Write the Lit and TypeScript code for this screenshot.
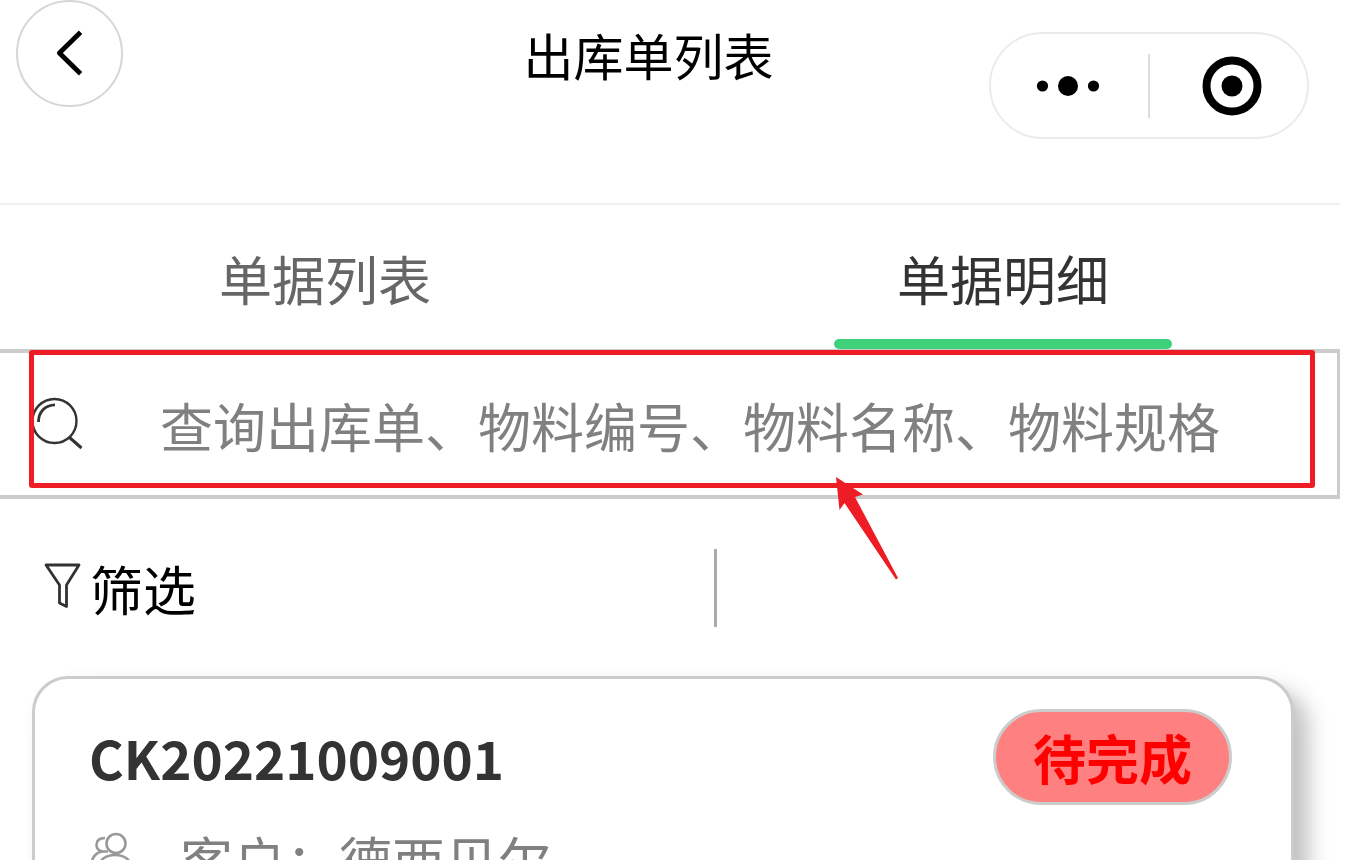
import { LitElement, html, css } from "lit";
import { customElement, property, state } from "lit/decorators.js";
import { classMap } from "lit/directives/class-map.js";

@customElement("nav-header")
class NavHeader extends LitElement {
  @property() heading = "";

  static styles = css`
    :host { display: block; }
    header {
      display: grid;
      grid-template-columns: 320px 1fr 320px;
      align-items: start;
      height: 203px;
      padding: 0 31px 0 16px;
      border-bottom: 2px solid #f0f0f0;
    }
    button {
      display: flex;
      align-items: center;
      justify-content: center;
      padding: 0;
      border: 0;
      background: none;
      cursor: pointer;
    }
    .back {
      box-sizing: border-box;
      width: 107px;
      height: 107px;
      border: 2px solid #d6d6d6;
      border-radius: 50%;
    }
    h1 {
      margin: 0;
      padding: 18px 28px 0 0;
      font-size: 50px;
      line-height: 72px;
      font-weight: 400;
      text-align: center;
      color: #000;
    }
    .capsule {
      box-sizing: border-box;
      display: grid;
      grid-template-columns: 1fr 2px 1fr;
      align-items: center;
      height: 107px;
      margin-top: 32px;
      border: 2px solid #ebebeb;
      border-radius: 54px;
    }
    .rule { height: 64px; background: #dcdcdc; }
    .capsule button { height: 100%; }
    .capsule .more { padding-right: 4px; }
    .capsule .close { padding-left: 6px; }
  `;

  render() {
    return html`
      <header>
        <button class="back" aria-label="返回">
          <svg width="107" height="107" viewBox="0 0 107 107" fill="none">
            <path d="M65 31.500 43 53 65 74.500" stroke="#000" stroke-width="5" stroke-linejoin="round" />
          </svg>
        </button>
        <h1>${this.heading}</h1>
        <div class="capsule">
          <button class="more" aria-label="更多">
            <svg width="64" height="22" viewBox="0 0 64 22">
              <circle cx="6.500" cy="11" r="5.600" /><circle cx="32" cy="11" r="10" /><circle cx="57.500" cy="11" r="5.600" />
            </svg>
          </button>
          <span class="rule"></span>
          <button class="close" aria-label="关闭">
            <svg width="60" height="60" viewBox="0 0 60 60">
              <circle cx="30" cy="30" r="25.500" fill="none" stroke="#000" stroke-width="8" />
              <circle cx="30" cy="30" r="10.500" />
            </svg>
          </button>
        </div>
      </header>
    `;
  }
}

@customElement("tab-bar")
class TabBar extends LitElement {
  @property({ attribute: false }) tabs: string[] = [];
  @state() private active = 1;

  static styles = css`
    :host { display: block; }
    nav {
      display: grid;
      grid-template-columns: 1fr 1fr;
      gap: 28px;
      padding-right: 12px;
    }
    button {
      display: flex;
      flex-direction: column;
      align-items: center;
      padding: 34px 0 0;
      border: 0;
      background: none;
      font-family: inherit;
      font-size: 53px;
      line-height: 78px;
      color: #666;
      cursor: pointer;
    }
    button::after {
      content: "";
      width: 52%;
      height: 10px;
      margin-top: 22px;
      border-radius: 5px;
    }
    .active { color: #333; }
    .active::after { background: #3fd07b; }
  `;

  render() {
    return html`
      <nav role="tablist">
        ${this.tabs.map(
          (tab, i) => html`
            <button
              role="tab"
              aria-selected=${i === this.active ? "true" : "false"}
              class=${classMap({ active: i === this.active })}
              @click=${() => (this.active = i)}
            >${tab}</button>
          `,
        )}
      </nav>
    `;
  }
}

@customElement("search-box")
class SearchBox extends LitElement {
  static styles = css`
    :host { display: block; position: relative; }
    label {
      display: flex;
      align-items: center;
      gap: 76px;
      height: 142px;
      padding-left: 32px;
      border: solid #ccc;
      border-width: 4px 3px 4px 0;
    }
    .glass { flex: none; }
    input {
      flex: 1;
      min-width: 0;
      height: 84px;
      padding: 2px 0 0;
      box-sizing: border-box;
      border: 0;
      outline: 0;
      background: none;
      font-family: inherit;
      font-size: 53px;
      color: #333;
    }
    input::placeholder { color: #808080; opacity: 1; }
    .frame {
      position: absolute;
      box-sizing: border-box;
      inset: 1px 25px 11px 29px;
      border: 5px solid #ee1c25;
      border-radius: 3px;
      pointer-events: none;
    }
    .arrow {
      position: absolute;
      left: 835px;
      top: 128px;
      pointer-events: none;
    }
  `;

  render() {
    return html`
      <label>
        <svg class="glass" width="52" height="54" viewBox="0 0 52 54" fill="none" stroke="#333" stroke-width="2.400">
          <circle cx="22.500" cy="24" r="22" />
          <path d="M37.500 40.500 49.500 51" stroke-width="3" />
          <path d="M6.500 25C6.500 15 13 8 23 7.800" stroke-width="2.800" />
        </svg>
        <input type="search" aria-label="查询" placeholder="查询出库单、物料编号、物料名称、物料规格" />
      </label>
      <div class="frame"></div>
      <svg class="arrow" width="65" height="104" viewBox="0 0 65 104">
        <path d="M1 0 28 17.500 20 20 63 101 61 102.500 9.500 26 4.500 33Z" fill="#ee1c25" />
      </svg>
    `;
  }
}

@customElement("order-card")
class OrderCard extends LitElement {
  @property() code = "";
  @property() status = "";
  @property() customer = "";

  static styles = css`
    :host {
      display: block;
      margin: 0 46px 0 32px;
      border: 3px solid #ccc;
      border-radius: 36px;
      background: #fff;
      box-shadow: 14px 14px 22px rgba(0, 0, 0, 0.25);
    }
    article { padding: 30px 59px 60px 54px; }
    .top {
      display: flex;
      align-items: center;
      justify-content: space-between;
    }
    h2 {
      margin: 0;
      font-size: 53px;
      line-height: 78px;
      font-weight: 700;
      color: #333;
    }
    .status {
      padding: 6px 37px;
      border: 3px solid #ccc;
      border-radius: 48px;
      background: #ff8080;
      font-size: 53px;
      line-height: 78px;
      font-weight: 700;
      color: #f00;
    }
    .row {
      display: flex;
      align-items: center;
      gap: 45px;
      margin-top: 15px;
      font-size: 53px;
      line-height: 78px;
      color: #808080;
    }
    .row svg { flex: none; }
  `;

  render() {
    return html`
      <article>
        <div class="top">
          <h2>${this.code}</h2>
          <span class="status">${this.status}</span>
        </div>
        <div class="row">
          <svg width="46" height="54" viewBox="0 0 46 54" fill="none" stroke="#999" stroke-width="2.600">
            <circle cx="27" cy="11.500" r="9.500" />
            <path d="M16 6C10 6 7.500 9 7.500 13 7.500 16.500 10 19 14 19.500M3 33C2 25 8 19.500 15 19.500H19" />
            <path d="M10 44V36C10 27.500 17 23 26 23S42 27.500 42 36V44Z" />
          </svg>
          <span>客户：${this.customer}</span>
        </div>
      </article>
    `;
  }
}

@customElement("app-root")
class AppRoot extends LitElement {
  static styles = css`
    :host {
      display: block;
      box-sizing: border-box;
      height: 100vh;
      overflow: hidden;
      padding-right: 21px;
      background: #fff;
      font-family: "Noto Sans CJK SC", sans-serif;
    }
    .filters {
      display: grid;
      grid-template-columns: 714px 3px 1fr;
      align-items: center;
      padding: 50px 0 49px;
    }
    .filters button {
      display: flex;
      align-items: center;
      gap: 9px;
      justify-self: start;
      margin-left: 44px;
      padding: 0;
      border: 0;
      background: none;
      font-family: inherit;
      font-size: 53px;
      line-height: 78px;
      color: #000;
      cursor: pointer;
    }
    .rule { height: 78px; background: #aaa; }
  `;

  render() {
    return html`
      <nav-header heading="出库单列表"></nav-header>
      <tab-bar .tabs=${["单据列表", "单据明细"]}></tab-bar>
      <search-box></search-box>
      <div class="filters">
        <button>
          <svg width="37" height="54" viewBox="0 0 37 54" fill="none" stroke="#333" stroke-width="2.800">
            <path d="M2 4H35L22.500 24V45.500L15.500 42V24Z" stroke-linejoin="round" />
          </svg>
          <span>筛选</span>
        </button>
        <span class="rule"></span>
      </div>
      <order-card code="CK20221009001" status="待完成" customer="德西贝尔"></order-card>
    `;
  }
}
